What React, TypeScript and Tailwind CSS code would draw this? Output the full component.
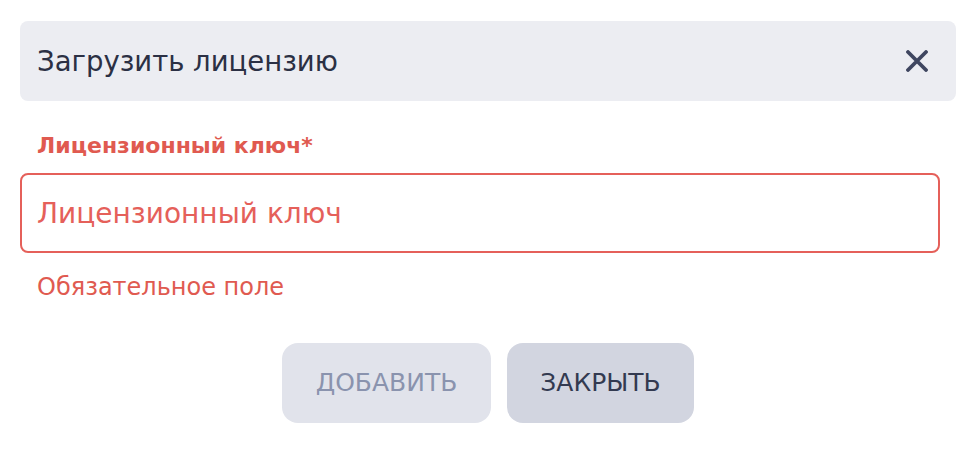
export default function App() {
  return (
    <div className="w-[976px] h-[460px] bg-white pt-[21px] font-['DejaVu_Sans',sans-serif]">
      <div className="mx-5 h-20 rounded-lg bg-[#ecedf2] flex items-center justify-between pl-[17px] pr-[28px]">
        <h2 className="text-[27.5px] leading-8 text-[#2b3044]">Загрузить лицензию</h2>
        <button className="text-[#3f4660]">
          <svg width="22" height="22" viewBox="0 0 22 22" fill="none">
            <path d="M2 2L20 20M20 2L2 20" stroke="currentColor" strokeWidth="3.8" strokeLinecap="round" />
          </svg>
        </button>
      </div>

      <div className="mt-[33px] px-5 pr-9">
        <label className="block pl-[17px] text-[22px] font-bold text-[#e05a50] leading-6">
          Лицензионный ключ*
        </label>
        <input
          className="mt-[15px] block w-full h-20 rounded-lg border-2 border-[#e5605a] px-[15px] text-[28px] outline-none placeholder:text-[#e5605a]"
          placeholder="Лицензионный ключ"
        />
        <p className="mt-[22px] pl-[17px] text-[24px] text-[#e05a50] leading-6">Обязательное поле</p>
      </div>

      <div className="mt-[44px] flex justify-center gap-4">
        <button
          disabled
          className="h-20 w-[209px] rounded-2xl bg-[#e1e3eb] text-[25px] text-[#8a93ae] uppercase"
        >
          Добавить
        </button>
        <button className="h-20 w-[187px] rounded-2xl bg-[#d2d5e0] text-[25px] text-[#333a50] uppercase">
          Закрыть
        </button>
      </div>
    </div>
  );
}
